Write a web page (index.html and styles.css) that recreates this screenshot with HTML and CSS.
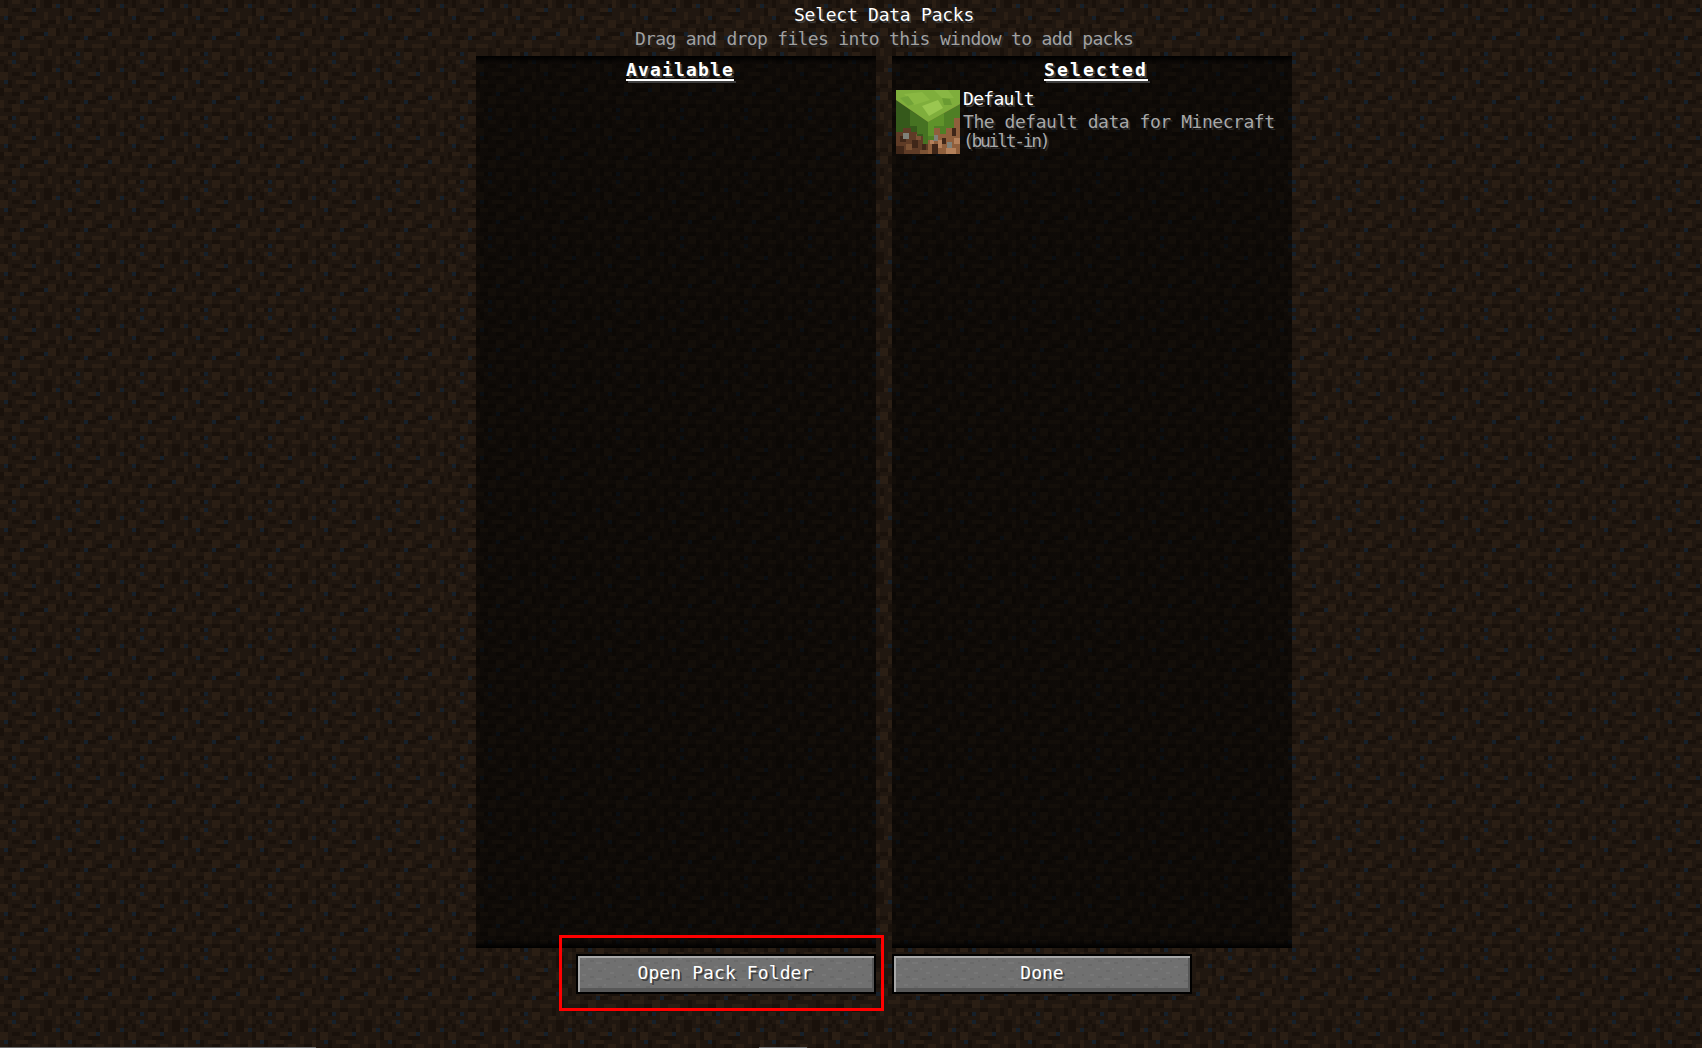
FILE: index.html
```html
<!DOCTYPE html>
<html lang="en">
  <head>
    <meta charset="UTF-8">
    <meta name="viewport" content="width=device-width, initial-scale=1.0">
    <title>Select Data Packs</title>
    <link rel="stylesheet" href="styles.css">
  </head>
  <body>
    <header class="heading">
      <h1 class="title">Select Data Packs</h1>
      <p class="hint">Drag and drop files into this window to add packs</p>
    </header>

    <main class="lists">
      <section class="list">
        <h2 class="list-title list-title-available">Available</h2>
      </section>
      <section class="list">
        <h2 class="list-title list-title-selected">Selected</h2>
        <div class="pack">
          <svg class="pack-icon" viewBox="0 0 64 64">
            <rect width="32" height="64" fill="#5e3b26"/>
            <rect x="32" width="32" height="64" fill="#8f5f3c"/>
            <path fill="#3f2618" d="M4 46h6v6H4zM16 50h6v8h-6zM26 54h4v6h-4zM0 56h8v8H0zM36 54h6v10h-6zM56 38h4v8h-4zM46 48h4v6h-4z"/>
            <path fill="#7b5234" d="M10 54h6v6h-6zM20 44h5v6h-5zM24 60h8v4h-8z"/>
            <path fill="#b3805a" d="M42 50h4v8h-4zM50 58h10v6H50zM34 50h4v4h-4zM58 48h6v6h-6z"/>
            <path fill="#7f8078" d="M7 43h6v6H7zM37 45h5v6h-5zM51 52h5v6h-5z"/>
            <polygon points="0,10 32,32 32,54 27,54 27,46 21,46 21,42 15,42 15,38 7,38 7,42 0,42" fill="#35591b"/>
            <polygon points="14,20 32,32 32,54 27,54 27,44 21,44 21,36 14,36" fill="#467222"/>
            <polygon points="32,32 64,14 64,28 58,28 58,38 50,38 50,44 44,44 44,38 38,38 38,50 32,50" fill="#4f7f25"/>
            <polygon points="32,32 48,23 48,36 38,36 38,46 32,46" fill="#5f922a"/>
            <polygon points="0,0 64,0 64,14 32,32 0,10" fill="#7fae3c"/>
            <polygon points="8,4 26,2 34,10 18,15" fill="#8ab843"/>
            <polygon points="26,16 42,10 47,18 33,26" fill="#9ac650"/>
            <polygon points="38,0 52,0 58,8 46,8" fill="#89b744"/>
            <polygon points="4,8 12,6 18,14 12,16" fill="#72a338"/>
            <polygon points="46,8 54,9 56,15 48,15" fill="#6a9b32"/>
          </svg>
          <div class="pack-text">
            <div class="pack-name">Default</div>
            <div class="pack-desc pack-desc-first">The default data for Minecraft</div>
            <div class="pack-desc pack-desc-second">(built-in)</div>
          </div>
        </div>
      </section>
    </main>

    <footer class="buttons">
      <div class="btn btn-open">Open Pack Folder</div>
      <div class="btn btn-done">Done</div>
    </footer>

    <!-- red annotation box round the first button -->
    <div class="callout"></div>
    <!-- what shows of the desktop under the window -->
    <div class="edge edge-left"></div>
    <div class="edge edge-mid"></div>
  </body>
</html>
```

FILE: styles.css
```css
:root {
	--dirt: url("data:image/svg+xml,%3Csvg xmlns='http://www.w3.org/2000/svg' width='64' height='64' viewBox='0 0 16 16' shape-rendering='crispEdges'%3E%3Crect width='16' height='16' fill='%23201710'/%3E%3Cpath fill='%232a1e14' d='M3 0h2v1h-2zM9 0h1v2h-1zM13 1h2v1h-2zM0 2h2v2h-2zM6 2h2v1h-2zM11 3h1v2h-1zM4 4h3v1h-3zM14 4h1v2h-1zM8 5h2v2h-2zM1 6h2v1h-2zM12 7h2v2h-2zM5 7h2v2h-2zM0 9h1v2h-1zM9 9h2v1h-2zM3 10h2v2h-2zM14 10h2v1h-2zM7 11h3v1h-3zM12 12h1v2h-1zM0 13h2v1h-2zM5 13h2v2h-2zM9 14h2v1h-2zM14 14h1v2h-1zM2 15h2v1h-2z'/%3E%3Cpath fill='%2319110b' d='M1 0h1v2h-1zM6 0h1v1h-1zM11 0h2v2h-2zM15 0h1v1h-1zM3 2h2v1h-2zM8 1h1v2h-1zM15 2h1v2h-1zM6 3h3v1h-3zM2 4h1v2h-1zM12 5h2v1h-2zM5 5h2v1h-2zM0 6h1v2h-1zM10 6h2v1h-2zM3 7h2v1h-2zM14 7h1v2h-1zM8 8h3v1h-3zM2 9h2v1h-2zM6 9h2v1h-2zM12 10h1v2h-1zM1 11h2v1h-2zM5 12h2v1h-2zM10 12h1v2h-1zM15 12h1v2h-1zM2 13h2v1h-2zM7 14h1v2h-1zM0 15h1v1h-1zM11 15h2v1h-2z'/%3E%3Cpath fill='%2316202a' d='M14 1h1v1h-1zM8 2h1v1h-1zM1 4h1v1h-1zM11 8h1v1h-1zM5 9h1v1h-1zM3 13h1v1h-1zM3 15h1v1h-1z'/%3E%3C/svg%3E");
	--stone: url("data:image/svg+xml,%3Csvg xmlns='http://www.w3.org/2000/svg' width='48' height='16' viewBox='0 0 24 8' shape-rendering='crispEdges'%3E%3Cpath fill='%23777777' d='M2 1h2v1h-2zM9 3h3v1h-3zM16 0h2v1h-2zM20 5h2v1h-2zM5 6h2v1h-2zM13 6h1v1h-1z'/%3E%3Cpath fill='%23696969' d='M6 2h2v1h-2zM14 3h2v1h-2zM1 4h2v1h-2zM18 2h1v1h-1zM10 7h2v1h-2zM22 1h1v1h-1z'/%3E%3C/svg%3E");
}

html, body {
	margin: 0;
	padding: 0;
}
body {
	position: relative;
	width: 1702px;
	height: 1048px;
	overflow: hidden;
	color: #fff;
	font-family: "DejaVu Sans Mono", "Liberation Mono", monospace;
	font-size: 18px;
	line-height: 18px;
	text-shadow: 2px 2px 0 #3f3f3f;
	background: #201710 var(--dirt);
}

.heading {
	height: 56px;
	padding-left: 66px;
	text-align: center;
}
.title, .hint, .list-title {
	margin: 0;
	font-size: inherit;
	font-weight: normal;
}
.title {
	padding-top: 6px;
	height: 18px;
	letter-spacing: -.25px;
}
.hint {
	padding-top: 6px;
	color: #a0a0a0;
	text-shadow: 2px 2px 0 #282828;
	letter-spacing: -.67px;
}

.lists {
	display: flex;
	gap: 16px;
	height: 892px;
	padding-left: 476px;
}
.list {
	width: 400px;
	box-sizing: border-box;
	padding: 5px 4px 0;
	background-color: #0f0a07;
	background-image:
		linear-gradient(#000, transparent 8px, transparent 884px, #000),
		linear-gradient(rgba(0, 0, 0, .55), rgba(0, 0, 0, .55)),
		var(--dirt);
}

.list-title {
	font-weight: bold;
	text-align: center;
	text-decoration: underline;
	text-decoration-thickness: 2px;
	text-underline-offset: 3px;
	padding-left: 8px;
	height: 29px;
}
.list-title-available {
	letter-spacing: 1.16px;
}
.list-title-selected {
	letter-spacing: 2.16px;
}

.pack {
	display: flex;
	gap: 3px;
}
.pack-icon {
	flex: none;
	width: 64px;
	height: 64px;
}
.pack-name {
	letter-spacing: -.7px;
}
.pack-desc {
	color: #a8a8a8;
	text-shadow: 2px 2px 0 #2a2a2a;
}
.pack-desc-first {
	margin-top: 5px;
	letter-spacing: -.45px;
}
.pack-desc-second {
	margin-top: 1px;
	letter-spacing: -2.3px;
}

.buttons {
	display: flex;
	gap: 16px;
	padding: 6px 0 0 576px;
}
.btn {
	width: 300px;
	height: 40px;
	box-sizing: border-box;
	border: 2px solid #000;
	line-height: 34px;
	text-align: center;
	background: #707070 var(--stone);
	box-shadow: inset 2px 2px 0 #a8a8a8, inset -2px -4px 0 #575757;
}
.btn-open {
	letter-spacing: .1px;
	padding-right: 2px;
}

.callout {
	position: absolute;
	left: 559px;
	top: 935px;
	width: 319px;
	height: 70px;
	border: 3px solid #f00;
}
.edge {
	position: absolute;
	bottom: 0;
	height: 1px;
	background: #6a6a6a;
}
.edge-left {
	left: 0;
	width: 316px;
}
.edge-mid {
	left: 759px;
	width: 48px;
}
```
